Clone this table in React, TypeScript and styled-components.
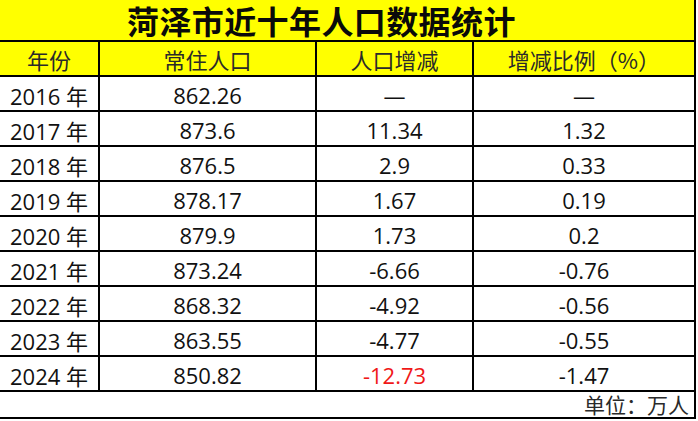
import {Fragment} from 'react'
import styled, {createGlobalStyle} from 'styled-components'

const Global = createGlobalStyle`
    html, body {
        margin: 0;
        padding: 0;
        background: #ffffff;
    }
    * {
        box-sizing: border-box;
    }
`

const Sheet = styled.div`
    width: 696px;
    display: grid;
    grid-template-columns: 100px 217px 157px 222px;
    font-family: 'Open Sans', 'Noto Sans CJK SC', sans-serif;
    color: #111;
`

const Title = styled.div`
    grid-column: 1 / span 4;
    height: 42px;
    background: #ffff00;
    border-right: 2px solid #000;
    border-bottom: 2px solid #000;
    display: flex;
    align-items: center;
    padding-left: 127px;
    font-family: 'Noto Sans CJK SC', sans-serif;
    font-weight: 700;
    font-size: 32px;
    letter-spacing: 0.4px;
    color: #0a0a0a;
    line-height: 40px;
`

const Cell = styled.div<{$head?: boolean; $red?: boolean}>`
    height: 35px;
    display: flex;
    align-items: center;
    justify-content: center;
    border-right: 2px solid #000;
    border-bottom: 2px solid #000;
    background: ${(p) => (p.$head ? '#ffff00' : '#ffffff')};
    font-family: ${(p) => (p.$head ? "'Noto Sans CJK SC', sans-serif" : "'Open Sans', 'Noto Sans CJK SC', sans-serif")};
    font-size: 22px;
    color: ${(p) => (p.$red ? '#f01818' : p.$head ? '#2a2a2a' : '#111')};
    white-space: nowrap;
    padding-top: ${(p) => (p.$head ? '0' : '2px')};
`

const Footer = styled.div`
    grid-column: 1 / span 4;
    height: 27px;
    border-right: 2px solid #000;
    border-bottom: 2px solid #000;
    display: flex;
    align-items: flex-end;
    justify-content: flex-end;
    padding-right: 5px;
    padding-bottom: 1px;
    font-family: 'Noto Sans CJK SC', sans-serif;
    font-size: 21px;
    line-height: 24px;
    color: #2a2a2a;
`

const heads = ['年份', '常住人口', '人口增减', '增减比例（%）']

const rows: [string, string, string, string][] = [
    ['2016', '862.26', '—', '—'],
    ['2017', '873.6', '11.34', '1.32'],
    ['2018', '876.5', '2.9', '0.33'],
    ['2019', '878.17', '1.67', '0.19'],
    ['2020', '879.9', '1.73', '0.2'],
    ['2021', '873.24', '-6.66', '-0.76'],
    ['2022', '868.32', '-4.92', '-0.56'],
    ['2023', '863.55', '-4.77', '-0.55'],
    ['2024', '850.82', '-12.73', '-1.47'],
]

function App() {
    return (
        <>
            <Global />
            <Sheet>
                <Title>菏泽市近十年人口数据统计</Title>
                {heads.map((h) => (
                    <Cell $head key={h}>
                        {h}
                    </Cell>
                ))}
                {rows.map(([year, pop, diff, pct]) => (
                    <Fragment key={year}>
                        <Cell>{year} 年</Cell>
                        <Cell>{pop}</Cell>
                        <Cell $red={year === '2024'}>{diff}</Cell>
                        <Cell>{pct}</Cell>
                    </Fragment>
                ))}
                <Footer>单位：万人</Footer>
            </Sheet>
        </>
    )
}

export default App
